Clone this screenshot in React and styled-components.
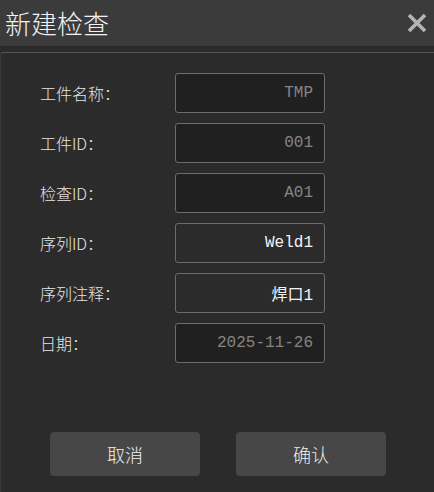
import React from "react";
import styled, { createGlobalStyle } from "styled-components";

const Global = createGlobalStyle`
  html, body {
    margin: 0;
    background: #2b2b2b;
  }
  body {
    font-family: "Noto Sans CJK SC", "Noto Sans", sans-serif;
  }
`;

const Window = styled.div`
  width: 434px;
  height: 492px;
  background: #2b2b2b;
  display: flex;
  flex-direction: column;
  overflow: hidden;
`;

const TitleBar = styled.div`
  height: 46px;
  background: #3b3b3b;
  display: flex;
  align-items: center;
  justify-content: space-between;
  padding: 0 6px 0 5px;
`;

const Title = styled.div`
  color: #f2f2f2;
  font-size: 26px;
  font-weight: 300;
  line-height: 1;
  margin-top: -1px;
`;

const Close = styled.svg`
  width: 20px;
  height: 20px;
  margin-right: 1px;
`;

const Frame = styled.div`
  margin-top: 6px;
  border-top: 1px solid #555555;
  border-left: 1px solid #3a3a3a;
  border-top-left-radius: 3px;
  flex: 1;
  display: flex;
  flex-direction: column;
`;

const Form = styled.div`
  display: grid;
  grid-template-columns: 135px 150px;
  row-gap: 10px;
  padding: 20px 0 0 39px;
`;

const Label = styled.div`
  color: #e6e6e6;
  font-size: 16px;
  font-weight: 300;
  display: flex;
  align-items: center;
`;

const Field = styled.div`
  height: 38px;
  border: 1px solid #6c6c6c;
  border-radius: 3px;
  background: ${(p) => (p.$editable ? "#2b2b2b" : "#202020")};
  color: ${(p) => (p.$editable ? "#f4f4f4" : "#858585")};
  font-family: "Liberation Mono", "Noto Sans CJK SC", monospace;
  font-size: 16px;
  display: flex;
  align-items: center;
  justify-content: flex-end;
  padding-right: 11px;
`;

const Actions = styled.div`
  display: flex;
  gap: 36px;
  padding: 69px 0 0 49px;
`;

const Button = styled.div`
  width: 150px;
  height: 44px;
  background: #474747;
  border-radius: 4px;
  color: #f0f0f0;
  font-size: 18px;
  font-weight: 300;
  display: flex;
  align-items: center;
  justify-content: center;
`;

const rows = [
  { label: "工件名称：", value: "TMP" },
  { label: "工件ID：", value: "001" },
  { label: "检查ID：", value: "A01" },
  { label: "序列ID：", value: "Weld1", editable: true },
  { label: "序列注释：", value: "焊口1", editable: true },
  { label: "日期：", value: "2025-11-26" },
];

export default function App() {
  return (
    <Window>
      <Global />
      <TitleBar>
        <Title>新建检查</Title>
        <Close viewBox="0 0 20 20">
          <path d="M2 2 L18 18 M18 2 L2 18" stroke="#b4b4b4" strokeWidth="3.6" strokeLinecap="butt" />
        </Close>
      </TitleBar>
      <Frame>
        <Form>
          {rows.map((r) => (
            <React.Fragment key={r.label}>
              <Label>{r.label}</Label>
              <Field $editable={r.editable}>{r.value}</Field>
            </React.Fragment>
          ))}
        </Form>
        <Actions>
          <Button>取消</Button>
          <Button>确认</Button>
        </Actions>
      </Frame>
    </Window>
  );
}
